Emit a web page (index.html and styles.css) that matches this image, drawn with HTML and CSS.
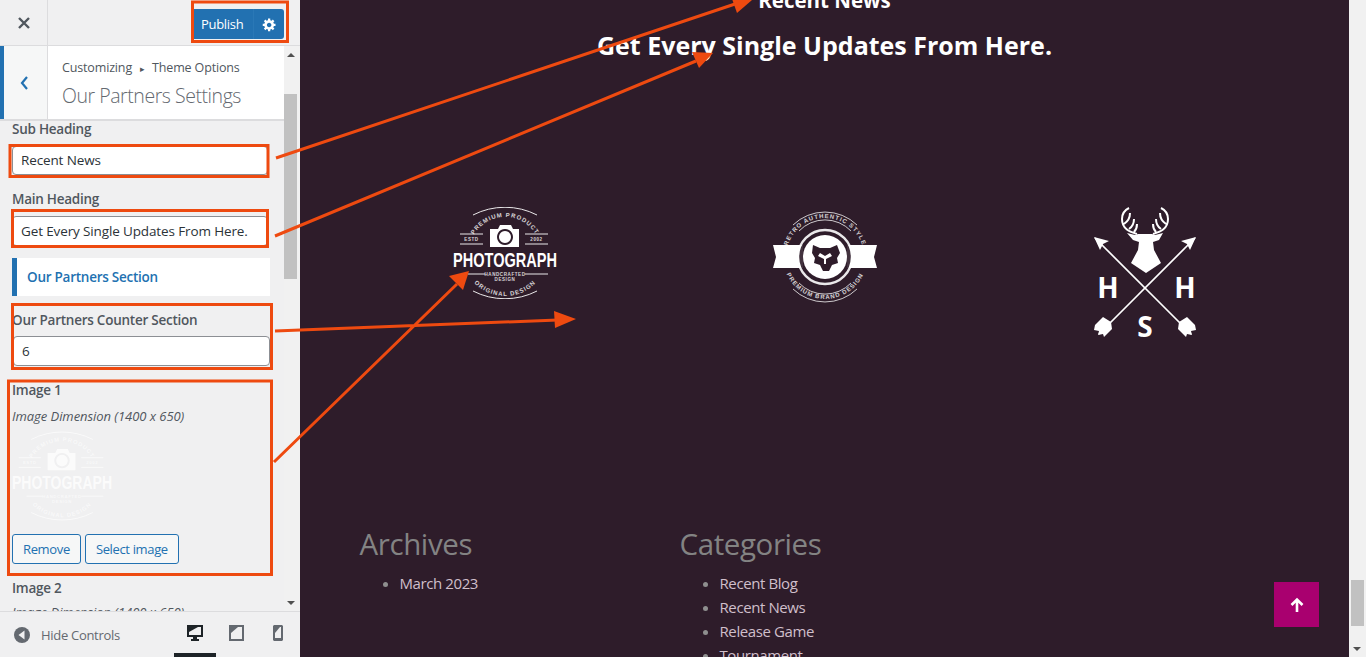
FILE: index.html
```html
<!DOCTYPE html>
<html lang="en">

<head>
    <meta charset="UTF-8">
    <meta name="viewport" content="width=device-width, initial-scale=1.0">
    <title>Our Partners Settings</title>
    <link rel="stylesheet" href="styles.css">
</head>

<body>

    <svg class="defs" width="0" height="0">
        <defs>
            <symbol id="logo-photo" viewBox="0 0 104 92">
                <path id="arc-top" d="M16 46 A36 36 0 0 1 88 46" fill="none"/>
                <path id="arc-bottom" d="M9 46 A43 43 0 0 0 95 46" fill="none"/>
                <path d="M20 8 A70 70 0 0 1 84 8 M20 84 A70 70 0 0 0 84 84" fill="none" stroke="currentColor" stroke-width=".9"/>
                <text class="logo-small"><textPath href="#arc-top" startOffset="50%" text-anchor="middle">PREMIUM PRODUCT</textPath></text>
                <text class="logo-small"><textPath href="#arc-bottom" startOffset="50%" text-anchor="middle">ORIGINAL DESIGN</textPath></text>
                <path fill-rule="evenodd" fill="currentColor" d="M37 22h8l2-4h11l2 4h6v18H37zM52 22a8 8 0 1 0 .01 0zM52 24a6 6 0 1 1-.01 0z"/>
                <circle cx="52" cy="30" r="3.5" fill="currentColor"/>
                <path d="M7 27h23M7 37h23M72 27h23M72 37h23M15 67h17M72 67h23" stroke="currentColor" stroke-width=".9"/>
                <text class="logo-tiny" x="18.5" y="34" text-anchor="middle">ESTD</text>
                <text class="logo-tiny" x="83.5" y="34" text-anchor="middle">2002</text>
                <text class="logo-word" x="0" y="60" textLength="104" lengthAdjust="spacingAndGlyphs">PHOTOGRAPH</text>
                <text class="logo-tiny" x="52" y="69" text-anchor="middle">HANDCRAFTED</text>
                <text class="logo-tiny" x="52" y="74" text-anchor="middle">DESIGN</text>
            </symbol>
            <symbol id="logo-lion" viewBox="0 0 104 98">
                <path id="lion-top" d="M13 50 A39 39 0 0 1 91 50" fill="none"/>
                <path id="lion-bottom" d="M10 50 A42 42 0 0 0 94 50" fill="none"/>
                <text class="logo-small"><textPath href="#lion-top" startOffset="50%" text-anchor="middle">RETRO AUTHENTIC STYLE</textPath></text>
                <text class="logo-small"><textPath href="#lion-bottom" startOffset="50%" text-anchor="middle">PREMIUM BRAND DESIGN</textPath></text>
                <path d="M20 18 A46 46 0 0 1 84 18M26 24 A36 36 0 0 1 78 24M20 82 A46 46 0 0 0 84 82M26 76 A36 36 0 0 0 78 76" fill="none" stroke="currentColor" stroke-width=".9" opacity=".85"/>
                <path fill="currentColor" d="M0 38h30v23H0l3-11zM104 38H74v23h30l-3-11z"/>
                <circle cx="52" cy="50" r="27" fill="#2e1c2a" stroke="currentColor" stroke-width="2.4" opacity=".9"/>
                <circle cx="52" cy="50" r="22" fill="currentColor"/>
                <path fill="#2e1c2a" d="M40 38l7 3h10l7-3 3 8-3 5 1 5-6 2-3 6h-6l-3-6-6-2 1-5-3-5zM47 46l-2 3 6 3v5h2v-5l6-3-2-3-5 3z" fill-rule="evenodd"/>
            </symbol>
            <symbol id="logo-deer" viewBox="0 0 102 130">
                <g id="deer-half" fill="none" stroke="currentColor">
                    <path stroke-width="1.7" d="M1 31L97 127"/>
                    <path stroke-width="2" d="M43 27C36 25 28 22 28 12 28 7 31 3 35 1M30 17C33 15 36 12 36 6M35 22C38 20 40 17 40 12M40 25C42 23 43 21 43 17"/>
                    <path fill="currentColor" stroke="none" d="M0 30l15 4-6 3-3 6zM17 115l-8-5-8 8-1 5 5 1-1 4 5-1 1 3 8-8z"/>
                </g>
                <use href="#deer-half" transform="translate(102) scale(-1 1)"/>
                <path fill="currentColor" d="M33 26l8 2 3-1h14l3 1 8-2-4 7-6 2 1 8 7 13-15 10-15-10 7-13 1-8-6-2z"/>
                <text class="logo-letter" x="14" y="91" text-anchor="middle">H</text>
                <text class="logo-letter" x="91" y="91" text-anchor="middle">H</text>
                <text class="logo-letter" x="51" y="129.500" text-anchor="middle">S</text>
            </symbol>
        </defs>
    </svg>

    <aside class="controls">
        <div class="controls-top">
            <div class="close-btn">
                <svg width="14" height="14" viewBox="0 0 14 14"><path d="M2 2l10 10M12 2L2 12" stroke="#50575e" stroke-width="2.4"/></svg>
            </div>
            <div class="publish">
                <span class="publish-label">Publish</span>
                <span class="publish-gear">
                    <svg width="15" height="15" viewBox="0 0 20 20"><path fill="#fff" fill-rule="evenodd" d="M18 12h-2.18c-.17.7-.44 1.35-.81 1.93l1.54 1.54-2.1 2.1-1.54-1.54c-.58.36-1.23.63-1.91.79V19H8v-2.18c-.68-.16-1.33-.43-1.91-.79l-1.54 1.54-2.12-2.12 1.54-1.54c-.36-.58-.63-1.23-.79-1.91H1V9.03h2.17c.16-.7.44-1.35.8-1.94L2.43 5.55l2.1-2.1 1.54 1.54c.58-.37 1.24-.64 1.93-.81V2h3v2.18c.68.16 1.33.43 1.91.79l1.54-1.54 2.12 2.12-1.54 1.54c.36.59.64 1.24.8 1.94H18V12zm-8.5 1.5c1.66 0 3-1.34 3-3s-1.34-3-3-3-3 1.34-3 3 1.34 3 3 3z"/></svg>
                </span>
            </div>
        </div>

        <div class="controls-mid">
            <div class="panel">
                <div class="section-head">
                    <div class="back-btn">
                        <svg width="10" height="16" viewBox="0 0 10 16"><path d="M8 2L3 8l5 6" fill="none" stroke="#2271b1" stroke-width="2.2"/></svg>
                    </div>
                    <div class="section-title">
                        <div class="crumbs">Customizing <span class="crumb-sep">&#9656;</span> Theme Options</div>
                        <div class="title">Our Partners Settings</div>
                    </div>
                </div>

                <div class="fields">
                    <label class="field-label label-sub">Sub Heading</label>
                    <div class="text-input input-sub">Recent News</div>

                    <label class="field-label label-main">Main Heading</label>
                    <div class="text-input input-main">Get Every Single Updates From Here.</div>

                    <div class="section-band">Our Partners Section</div>

                    <label class="field-label label-counter">Our Partners Counter Section</label>
                    <div class="text-input input-counter">6</div>

                    <label class="field-label label-image">Image 1</label>
                    <div class="hint">Image Dimension (1400 x 650)</div>
                    <svg class="thumb" width="100" height="92"><use href="#logo-photo"/></svg>
                    <div class="buttons">
                        <span class="btn">Remove</span>
                        <span class="btn">Select image</span>
                    </div>

                    <label class="field-label label-image2">Image 2</label>
                    <div class="hint hint-next">Image Dimension (1400 x 650)</div>
                </div>
            </div>

            <div class="side-scroll">
                <span class="arrow-up"></span>
                <span class="side-thumb"></span>
                <span class="arrow-down"></span>
            </div>
        </div>

        <div class="controls-foot">
            <div class="hide-controls">
                <svg width="16" height="16" viewBox="0 0 16 16"><circle cx="8" cy="8" r="8" fill="#646970"/><path d="M10.500 3.500v9L4.500 8z" fill="#f0f0f1"/></svg>
                <span>Hide Controls</span>
            </div>
            <div class="devices">
                <span class="device device-on">
                    <svg width="16" height="16" viewBox="0 0 16 16"><path fill="#1d2327" fill-rule="evenodd" d="M0 0h16v12h-6v2h2v2H4v-2h2v-2H0zM2 2v8h12V2z"/><path fill="#1d2327" d="M2 2h9L2 7z"/></svg>
                </span>
                <span class="device">
                    <svg width="15" height="16" viewBox="0 0 15 16"><path fill="#646970" fill-rule="evenodd" d="M0 0h15v16H0zM2 2v12h11V2z"/><path fill="#646970" d="M2 2h7L2 8z"/></svg>
                </span>
                <span class="device">
                    <svg width="10" height="16" viewBox="0 0 10 16"><path fill="#646970" fill-rule="evenodd" d="M0 1l1-1h8l1 1v14l-1 1H1l-1-1zM2 2v11h6V2z"/><path fill="#646970" d="M2 2h5L2 8z"/></svg>
                </span>
            </div>
        </div>
    </aside>

    <main class="preview">
        <div class="page">
            <div class="partners-head">
                <h4 class="sub-heading">Recent News</h4>
                <h2 class="main-heading">Get Every Single Updates From Here.</h2>
            </div>

            <div class="wrap logos">
                <div class="logo-cell"><svg class="logo-1" width="104" height="92"><use href="#logo-photo"/></svg></div>
                <div class="logo-cell"><svg class="logo-2" width="104" height="98"><use href="#logo-lion"/></svg></div>
                <div class="logo-cell"><svg class="logo-3" width="102" height="130"><use href="#logo-deer"/></svg></div>
            </div>

            <div class="wrap widgets">
                <div class="widget">
                    <h3>Archives</h3>
                    <ul>
                        <li>March 2023</li>
                    </ul>
                </div>
                <div class="widget">
                    <h3>Categories</h3>
                    <ul>
                        <li>Recent Blog</li>
                        <li>Recent News</li>
                        <li>Release Game</li>
                        <li>Tournament</li>
                    </ul>
                </div>
            </div>
        </div>

        <div class="page-scroll">
            <span class="page-thumb"></span>
            <span class="arrow-down"></span>
        </div>

        <a class="to-top" href="#">
            <svg width="16" height="16" viewBox="0 0 16 16"><path d="M8 15V3M2.500 8L8 2.500 13.500 8" fill="none" stroke="#fff" stroke-width="2.6"/></svg>
        </a>
    </main>

    <!-- red notes drawn on top of the screenshot -->
    <svg class="notes" width="1366" height="657" viewBox="0 0 1366 657">
        <g fill="none" stroke="#ee4a10" stroke-width="3">
            <rect x="192.500" y="2" width="95" height="39.500"/>
            <rect x="10" y="145.500" width="258" height="31"/>
            <rect x="12.500" y="210.500" width="255" height="36"/>
            <rect x="12.500" y="304.500" width="259" height="64"/>
            <rect x="8.500" y="381" width="263" height="193.500"/>
            <path d="M276 158L735 4M275 236L696 61M275 331L558 320M274 462L457 284"/>
        </g>
        <g fill="#ee4a10">
            <path d="M752 0L737 13 731 -4z"/>
            <path d="M713 53L692 52 699 68z"/>
            <path d="M576 319L555 328 554 311z"/>
            <path d="M469 271L449 276 463 290z"/>
        </g>
    </svg>

</body>

</html>
```

FILE: styles.css
```css
* {
    box-sizing: border-box;
}

body {
    margin: 0;
    height: 100vh;
    display: flex;
    overflow: hidden;
    position: relative;
    font-family: "Open Sans", Arial, sans-serif;
    background-color: #2e1c2a;
}

.defs {
    position: absolute;
}

.notes {
    position: absolute;
    top: 0;
    left: 0;
    pointer-events: none;
}

/* left customizer column */
.controls {
    width: 300px;
    height: 100%;
    flex-shrink: 0;
    display: flex;
    flex-direction: column;
    background-color: #f0f0f1;
    color: #50575e;
    overflow: hidden;
}

.controls-top {
    height: 46px;
    flex-shrink: 0;
    display: flex;
    align-items: flex-start;
    justify-content: space-between;
    border-bottom: 1px solid #dcdcde;
}

.close-btn {
    width: 48px;
    height: 45px;
    display: flex;
    align-items: center;
    justify-content: center;
    border-right: 1px solid #dcdcde;
}

.publish {
    width: 91px;
    height: 30px;
    margin: 9px 16px 0 0;
    display: flex;
    align-items: center;
    justify-content: space-between;
    background-color: #2271b1;
    border-radius: 0 3px 3px 0;
    color: #fff;
    font-size: 13px;
    letter-spacing: -.3px;
}

.publish-label {
    padding-left: 8px;
}

.publish-gear {
    width: 31px;
    height: 100%;
    display: flex;
    align-items: center;
    justify-content: center;
    border-left: 1px solid #2a78b6;
}

.controls-mid {
    flex: 1;
    min-height: 0;
    display: flex;
}

.panel {
    width: 284px;
    overflow: hidden;
}

.section-head {
    height: 75px;
    display: flex;
    background-color: #fff;
    border-bottom: 2px solid #dcdcde;
}

.back-btn {
    width: 48px;
    display: flex;
    align-items: center;
    justify-content: center;
    background-color: #f6f7f7;
    border-left: 4px solid #2271b1;
    border-right: 1px solid #dcdcde;
    padding-right: 4px;
}

.section-title {
    padding: 13px 0 0 14px;
}

.crumbs {
    font-size: 12.5px;
    line-height: 18px;
    letter-spacing: -.15px;
    color: #50575e;
}

.crumb-sep {
    font-size: 9px;
    padding: 0 4.5px;
}

.title {
    margin-top: 5px;
    font-size: 19.5px;
    line-height: 26px;
    font-weight: 300;
    letter-spacing: -.45px;
    color: #646970;
}

.fields {
    padding-left: 12px;
}

.field-label {
    display: block;
    font-size: 13.5px;
    line-height: 18px;
    font-weight: 600;
    letter-spacing: -.25px;
    color: #50575e;
}

.label-sub {
    margin-top: -1px;
}

.text-input {
    display: flex;
    align-items: center;
    width: 256px;
    height: 29px;
    padding-left: 8px;
    background-color: #fff;
    border: 1px solid #8c8f94;
    border-radius: 4px;
    font-size: 13.5px;
    letter-spacing: -.13px;
    color: #2c3338;
}

.input-sub {
    margin-top: 8px;
    padding-bottom: 2px;
}

.label-main {
    margin-top: 15px;
}

.input-main {
    height: 30px;
    margin-top: 8px;
}

.section-band {
    width: 258px;
    height: 38px;
    margin-top: 12px;
    display: flex;
    align-items: center;
    padding-left: 10px;
    background-color: #fff;
    border-left: 5px solid #2271b1;
    font-size: 13.5px;
    font-weight: 600;
    letter-spacing: -.25px;
    color: #2271b1;
}

.label-counter {
    margin-top: 15px;
}

.input-counter {
    width: 257px;
    height: 30px;
    margin: 7px 0 0 1px;
    padding-left: 8px;
}

.label-image {
    margin-top: 15px;
}

.hint {
    margin-top: 8px;
    font-size: 13px;
    line-height: 18px;
    font-style: italic;
    letter-spacing: -.05px;
    color: #50575e;
}

.hint-next {
    margin-top: 6px;
}

.thumb {
    display: block;
    margin-top: 5px;
    color: #fff;
    opacity: .75;
}

.buttons {
    display: flex;
    gap: 4px;
    margin-top: 12px;
}

.btn {
    height: 30px;
    padding: 0 10px;
    display: flex;
    align-items: center;
    background-color: #f6f7f7;
    border: 1px solid #2271b1;
    border-radius: 3px;
    font-size: 13px;
    letter-spacing: -.35px;
    color: #2271b1;
}

.label-image2 {
    margin-top: 15px;
}

.side-scroll {
    width: 16px;
    position: relative;
    background-color: #f1f1f1;
}

.side-thumb {
    display: block;
    width: 13px;
    height: 185px;
    margin-top: 48px;
    background-color: #c1c1c1;
}

.arrow-up,
.arrow-down {
    position: absolute;
    left: 3px;
    width: 0;
    height: 0;
    border-left: 4px solid transparent;
    border-right: 4px solid transparent;
}

.arrow-up {
    top: 7px;
    border-bottom: 4px solid #505050;
}

.arrow-down {
    bottom: 6px;
    border-top: 4px solid #505050;
}

.controls-foot {
    height: 46px;
    flex-shrink: 0;
    display: flex;
    justify-content: space-between;
    border-top: 1px solid #dcdcde;
}

.hide-controls {
    display: flex;
    align-items: center;
    gap: 11px;
    padding-left: 14px;
    font-size: 13px;
    letter-spacing: -.3px;
    color: #646970;
}

.devices {
    display: flex;
    margin-right: 2px;
}

.device {
    width: 42px;
    display: flex;
    align-items: center;
    justify-content: center;
    border-bottom: 4px solid transparent;
}

.device + .device {
    width: 41px;
}

.device-on {
    border-bottom-color: #1d2327;
}

/* site preview */
.preview {
    flex: 1;
    min-width: 0;
    height: 100%;
    display: flex;
    position: relative;
    overflow: hidden;
}

.page {
    flex: 1;
    min-width: 0;
    height: 100%;
    overflow: hidden;
}

.partners-head {
    text-align: center;
    color: #fff;
    margin-top: -14px;
}

.sub-heading {
    margin: 0;
    font-size: 20.5px;
    line-height: 28px;
    font-weight: 700;
}

.main-heading {
    margin: 12px 0 0;
    font-size: 25px;
    line-height: 38px;
    font-weight: 700;
}

.wrap {
    width: 960px;
    margin: 0 auto;
    display: flex;
}

.logos {
    margin-top: 143px;
    height: 130px;
    color: #fff;
}

.logo-cell {
    width: 320px;
    display: flex;
    justify-content: center;
    align-items: flex-start;
}

.logo-1,
.logo-2,
.logo-3 {
    display: block;
}

.logo-tiny {
    font-family: "Liberation Sans", Arial, sans-serif;
    font-size: 4.5px;
    font-weight: 700;
    letter-spacing: .6px;
    fill: currentColor;
    opacity: .8;
}

.logo-small {
    font-family: "Liberation Sans", Arial, sans-serif;
    font-size: 6px;
    font-weight: 700;
    letter-spacing: 1px;
    fill: currentColor;
    opacity: .8;
}

.logo-word {
    font-family: "Liberation Sans", Arial, sans-serif;
    font-size: 20px;
    font-weight: 700;
    fill: currentColor;
}

.logo-letter {
    font-family: "Open Sans", Arial, sans-serif;
    font-size: 28px;
    font-weight: 700;
    fill: currentColor;
}

.widgets {
    margin-top: 186px;
}

.widget {
    width: 320px;
    padding-left: 15px;
}

.widget h3 {
    margin: 0;
    font-size: 29.5px;
    line-height: 42px;
    font-weight: 500;
    letter-spacing: -.4px;
    color: #838383;
}

.widget ul {
    margin: 6px 0 0;
    padding-left: 40px;
}

.widget li {
    font-size: 15px;
    line-height: 24px;
    letter-spacing: -.4px;
    color: #d0bfcb;
}

.widget li::marker {
    color: #8f8f8f;
}

.page-scroll {
    width: 17px;
    position: relative;
    background-color: #f1f1f1;
}

.page-thumb {
    display: block;
    width: 13px;
    height: 46px;
    margin: 580px 0 0 2px;
    background-color: #c1c1c1;
}

.page-scroll .arrow-down {
    left: 4px;
}

.to-top {
    position: absolute;
    left: 974px;
    top: 582px;
    width: 45px;
    height: 45px;
    display: flex;
    align-items: center;
    justify-content: center;
    background-color: #a9006f;
}
```
